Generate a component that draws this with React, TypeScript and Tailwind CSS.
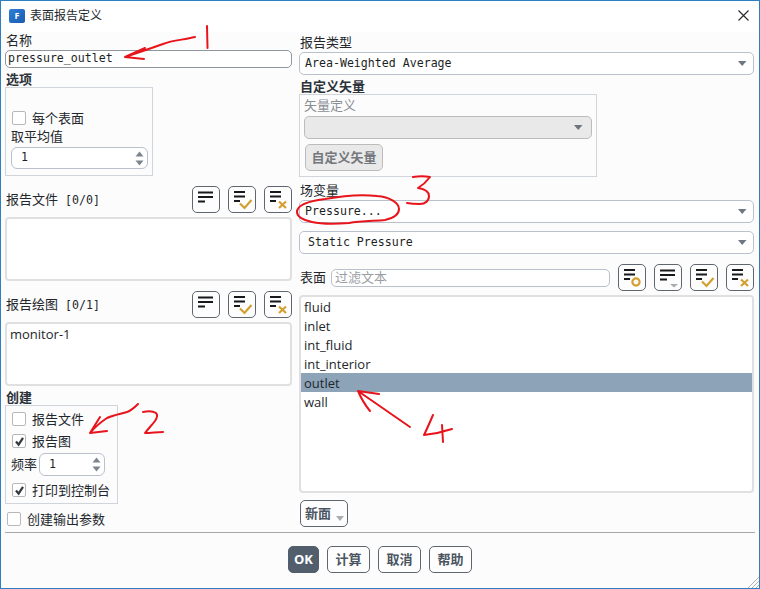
const cjk = "font-['Open_Sans','Noto_Sans_CJK_SC',sans-serif]";
const mono = "font-['DejaVu_Sans_Mono','Noto_Sans_CJK_SC',monospace]";

function ToolButton({ mark }: { mark?: 'check' | 'x' | 'circle' | 'menu' }) {
    const long = mark === 'menu' || !mark;
    return (
        <button className="w-[28px] h-[27px] shrink-0 rounded-[5px] border border-[#5f6670] bg-[#fdfdfd]">
            <svg width="26" height="25" viewBox="0 0 26 25" className="block">
                <path d={long ? 'M5 5.5h15M5 10h15M5 14.5h7' : 'M5 5h11M5 9.5h11M5 14h6'} stroke="#17191c" strokeWidth="2" fill="none" />
                {mark === 'check' && <path d="M11 16.5l4.5 4.5 7-8" stroke="#d3a02f" strokeWidth="2.2" fill="none" />}
                {mark === 'x' && <path d="M14 14.5l7 6.5M21 14.5l-7 6.5" stroke="#d3a02f" strokeWidth="2.2" fill="none" />}
                {mark === 'circle' && <circle cx="17" cy="17" r="3.6" stroke="#d3a02f" strokeWidth="2.2" fill="none" />}
                {mark === 'menu' && <path d="M15 19h8l-4 3.5z" fill="#a9adb2" />}
            </svg>
        </button>
    );
}

function Select({ value, className }: { value: string; className?: string }) {
    return (
        <div className={`h-[23px] rounded-[5px] border border-[#b9c2cc] bg-white flex items-center justify-between pl-[5px] pr-[6px] ${className ?? ''}`}>
            <span className={`${mono} text-[11.6px] text-[#1c1f24] whitespace-pre`}>{value}</span>
            <Caret />
        </div>
    );
}

function Caret({ color = '#6d7782' }: { color?: string }) {
    return (
        <svg width="10" height="7" viewBox="0 0 10 7">
            <path d="M1 1h8.5L5.2 6z" fill={color} />
        </svg>
    );
}

function Spinner({ className }: { className: string }) {
    return (
        <div className={`rounded-[6px] border border-[#b9c2cc] bg-white flex items-center justify-between pl-[9px] pr-[3px] ${className}`}>
            <span className={`${mono} text-[11.6px] text-[#1c1f24]`}>1</span>
            <div className="flex flex-col gap-[3px]">
                <svg width="9" height="6" viewBox="0 0 9 6"><path d="M0.5 5.5h8L4.5 0.5z" fill="#7c858f" /></svg>
                <svg width="9" height="6" viewBox="0 0 9 6"><path d="M0.5 0.5h8l-4 5z" fill="#7c858f" /></svg>
            </div>
        </div>
    );
}

function Check({ label, checked, className }: { label: string; checked?: boolean; className?: string }) {
    return (
        <div className={`flex items-center gap-[6px] ${className ?? ''}`}>
            <div className="w-[14px] h-[14px] border border-[#b8b8b8] rounded-[2px] bg-white flex items-center justify-center">
                {checked && (
                    <svg width="11" height="11" viewBox="0 0 11 11">
                        <path d="M2 5.5l2.6 3.2L9 1.8" stroke="#33383e" strokeWidth="2.2" fill="none" />
                    </svg>
                )}
            </div>
            <span className="text-[13px] text-[#23272c] leading-none">{label}</span>
        </div>
    );
}

function Label({ text, bold, className }: { text: string; bold?: boolean; className: string }) {
    return (
        <div className={`flex items-end text-[13px] ${bold ? 'leading-[15px] font-bold text-[#2c3239]' : 'leading-[17px] pb-px text-[#23272c]'} ${className}`}>
            {text}
        </div>
    );
}

function ListHeader({ name, count }: { name: string; count: string }) {
    return (
        <div className="h-[27px] mt-[10px] flex items-center justify-between">
            <span className="text-[13px] text-[#23272c] pl-px">
                {name}
                <span className={`${mono} text-[11.6px] whitespace-pre`}> {count}</span>
            </span>
            <div className="flex gap-[8px]">
                <ToolButton />
                <ToolButton mark="check" />
                <ToolButton mark="x" />
            </div>
        </div>
    );
}

function ListBox({ className, children }: { className: string; children?: React.ReactNode }) {
    return <div className={`mt-[4px] rounded-[4px] border-2 border-[#e0e0e0] bg-white ${className}`}>{children}</div>;
}

function FooterButton({ text, primary }: { text: string; primary?: boolean }) {
    return (
        <button
            className={`h-[27px] rounded-[5px] border text-[13px] font-bold ${
                primary ? 'w-[31px] bg-[#535e6c] border-[#535e6c] text-white' : 'w-[43px] bg-[#fdfdfd] border-[#5f6670] text-[#4b5561]'
            }`}
        >
            {text}
        </button>
    );
}

const surfaces = ['fluid', 'inlet', 'int_fluid', 'int_interior', 'outlet', 'wall'];

export default function App() {
    return (
        <div className={`relative w-[760px] h-[589px] border border-[#2d7fc1] bg-[#fcfcfc] overflow-hidden ${cjk}`}>
            {/* Title bar */}
            <div className="h-[31px] pb-[2px] bg-white flex items-center justify-between pl-[8px] pr-[10px]">
                <div className="flex items-center gap-[5px]">
                    <div className="w-[16px] h-[14px] rounded-[2px] bg-gradient-to-br from-[#2e7fd6] to-[#1a5cb0] flex items-center justify-center text-white text-[9px] font-bold leading-none">
                        F
                    </div>
                    <span className="text-[12px] text-[#23272c]">表面报告定义</span>
                </div>
                <svg width="11" height="11" viewBox="0 0 11 11">
                    <path d="M0.5 0.5l10 10M10.5 0.5l-10 10" stroke="#23272c" strokeWidth="1.1" fill="none" />
                </svg>
            </div>

            <div className="px-[4px] grid grid-cols-[287px_455px] gap-x-[7px] h-[500px]">
                {/* Left column */}
                <div className="flex flex-col">
                    <Label text="名称" className="h-[18px] pl-px" />
                    <div className="h-[18px] rounded-[5px] border border-[#8f969e] bg-white flex items-center pl-[2px]">
                        <span className={`${mono} text-[11.6px] text-[#1c1f24]`}>pressure_outlet</span>
                    </div>
                    <Label text="选项" bold className="h-[19px] pl-px" />
                    <div className="w-[148px] h-[89px] border border-[#cfd5db] flex flex-col px-[5px]">
                        <Check label="每个表面" className="mt-[23px] pl-[1px]" />
                        <span className="text-[13px] text-[#23272c] leading-[17px] mt-[3px]">取平均值</span>
                        <Spinner className="w-[137px] h-[22px] mt-[2px]" />
                    </div>

                    <ListHeader name="报告文件" count="[0/0]" />
                    <ListBox className="h-[64px]" />

                    <ListHeader name="报告绘图" count="[0/1]" />
                    <ListBox className="h-[64px] px-[3px] py-[1px]">
                        <span className="text-[13px] text-[#23272c] leading-[18px] block">monitor-1</span>
                    </ListBox>

                    <Label text="创建" bold className="h-[19px] pl-px" />
                    <div className="w-[113px] h-[99px] border border-[#cfd5db] flex flex-col px-[6px] pt-[6px]">
                        <Check label="报告文件" />
                        <Check label="报告图" checked className="mt-[8px]" />
                        <div className="flex items-center gap-[2px] mt-[5px] -ml-px">
                            <span className="text-[13px] text-[#23272c]">频率</span>
                            <Spinner className="w-[66px] h-[23px]" />
                        </div>
                        <Check label="打印到控制台" checked className="mt-[7px]" />
                    </div>
                    <Check label="创建输出参数" className="mt-[8px] pl-[2px]" />
                </div>

                {/* Right column */}
                <div className="flex flex-col">
                    <Label text="报告类型" className="h-[20px] pl-px" />
                    <Select value="Area-Weighted Average" />
                    <Label text="自定义矢量" bold className="h-[19px] pl-px" />
                    <div className="w-[298px] h-[83px] border border-[#cfd5db] px-[4px] flex flex-col">
                        <span className="text-[13px] text-[#8a8f95] leading-[17px] mt-[2px]">矢量定义</span>
                        <div className="h-[23px] mt-[2px] rounded-[5px] border border-[#bcbcbc] bg-[#e9e9e9] flex items-center justify-end pr-[8px]">
                            <Caret color="#70757b" />
                        </div>
                        <button className="w-[78px] h-[27px] mt-[5px] ml-px rounded-[5px] border border-[#bcbcbc] bg-[#e9e9e9] text-[13px] font-bold text-[#74787d]">
                            自定义矢量
                        </button>
                    </div>
                    <Label text="场变量" className="h-[23px] pl-px" />
                    <Select value="Pressure..." />
                    <Select value=" Static Pressure" className="mt-[8px] !pl-[1px]" />
                    <div className="h-[27px] mt-[10px] flex items-center">
                        <span className="text-[13px] text-[#23272c] w-[32px] pl-px">表面</span>
                        <div className="w-[279px] h-[18px] rounded-[5px] border border-[#b9c2cc] bg-white flex items-center pl-[3px] text-[13px] text-[#9a9ea3]">
                            过滤文本
                        </div>
                        <div className="flex gap-[8px] ml-auto">
                            <ToolButton mark="circle" />
                            <ToolButton mark="menu" />
                            <ToolButton mark="check" />
                            <ToolButton mark="x" />
                        </div>
                    </div>
                    <ListBox className="h-[198px]">
                        {surfaces.map((s) => (
                            <div
                                key={s}
                                className={`h-[19px] pl-[3px] pt-[2px] flex items-center text-[13px] text-[#23272c] ${s === 'outlet' ? 'bg-[#8ca3b8]' : ''}`}
                            >
                                {s}
                            </div>
                        ))}
                    </ListBox>
                    <button className="relative w-[48px] h-[27px] mt-[7px] ml-px rounded-[5px] border border-[#5f6670] bg-[#fdfdfd] text-[13px] font-bold text-[#4b5561] text-left pl-[4px]">
                        新面
                        <svg width="8" height="5" viewBox="0 0 8 5" className="absolute right-[3px] bottom-[5px]">
                            <path d="M0 0h8L4 5z" fill="#a9adb2" />
                        </svg>
                    </button>
                </div>
            </div>

            {/* Footer */}
            <div className="mx-[4px] h-px bg-[#a8a8a8]" />
            <div className="flex justify-center gap-[8px] pt-[13px] w-[758px]">
                <FooterButton text="OK" primary />
                <FooterButton text="计算" />
                <FooterButton text="取消" />
                <FooterButton text="帮助" />
            </div>

            {/* Resize grip */}
            <svg width="12" height="12" viewBox="0 0 12 12" className="absolute right-0 bottom-0">
                <path d="M12 1L1 12M12 5l-7 7M12 9l-3 3" stroke="#b5b5b5" strokeWidth="1" fill="none" />
            </svg>

            {/* Red pen annotations over the dialog */}
            <svg width="760" height="589" viewBox="0 0 760 589" className="absolute -left-px -top-px pointer-events-none">
                <g stroke="#e8141c" strokeWidth="2" fill="none" strokeLinecap="round" strokeLinejoin="round">
                    <path d="M207 26l0.5 22" />
                    <path d="M195 37c-12 3-22 3-32 7c-14 5-26 9-38 13M125 57l20-9M125 57l19 2" />
                    <path d="M297 212c0-7 12-11 28-13c16-3 36-5 52-3c13 1 22 7 22 13c0 6-5 9-14 11c-10 1-24 1-36 3c-13 1-28 1-37-1c-9-2-15-5-15-10z" />
                    <path d="M413 177c6-1 12-1 17 0c-3 4-7 8-12 11c6 1 11 3 11 8c0 5-4 8-9 8c-4 0-8 0-13-1" />
                    <path d="M138 404c-4 4-8 7-11 8c-7 2-14 3-20 6c-6 4-12 9-17 15M90 433l10-16M90 433l17-2" />
                    <path d="M143 412c5-1 10-1 13 1c2 2 1 5-1 8c-3 4-7 8-10 12c6 0 12-1 18-1" />
                    <path d="M410 427l-52-36M358 391l21 3M358 391c3 7 7 14 12 20" />
                    <path d="M433 415c-3 7-6 14-9 20c9-1 19-3 28-6M442 425l1 17" />
                </g>
            </svg>
        </div>
    );
}
